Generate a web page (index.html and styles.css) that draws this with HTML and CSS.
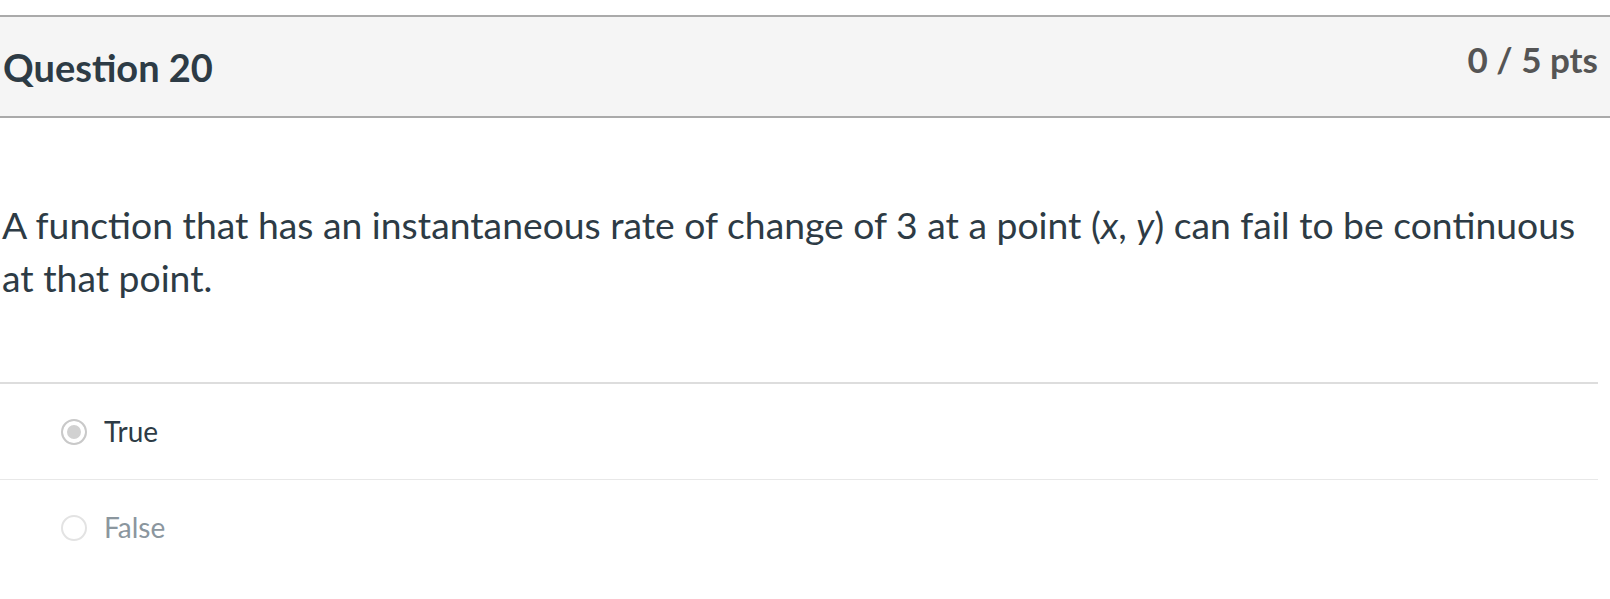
FILE: index.html
```html
<!DOCTYPE html>
<html lang="en">
<head>
<meta charset="utf-8">
<title>Question 20</title>
<link rel="stylesheet" href="styles.css">
</head>
<body>
<div class="question">
  <div class="q-header">
    <h2 class="q-title">Question 20</h2>
    <div class="q-points">0 / 5 pts</div>
  </div>
  <div class="q-text">A function that has an instantaneous rate of change of 3 at a point (<i>x</i>, <i>y</i>) can fail to be continuous at that point.</div>
  <div class="answers">
    <div class="answer answer-selected">
      <span class="radio radio-checked"></span>
      <span class="answer-label">True</span>
    </div>
    <div class="answer answer-muted">
      <span class="radio"></span>
      <span class="answer-label">False</span>
    </div>
  </div>
</div>
</body>
</html>
```

FILE: styles.css
```css
html, body {
  margin: 0;
  padding: 0;
  background: #ffffff;
}
body {
  font-family: Lato, "Open Sans", "Liberation Sans", sans-serif;
  color: #2d3b45;
}
.question {
  padding-top: 15px;
}
.q-header {
  display: flex;
  justify-content: space-between;
  align-items: flex-start;
  height: 99px;
  background: #f5f5f5;
  border-top: 2px solid #aaaaaa;
  border-bottom: 2px solid #aaaaaa;
  padding: 0 12px 0 3px;
}
.q-title {
  margin: 28px 0 0 0;
  font-size: 38px;
  line-height: 1.2;
  font-weight: 700;
  color: #2d3b45;
}
.q-points {
  margin-top: 21px;
  font-size: 35px;
  line-height: 1.2;
  font-weight: 700;
  color: #555555;
}
.q-text {
  margin: 80px 12px 0 2px;
  font-size: 37.3px;
  line-height: 53px;
  color: #2d3b45;
}
.answers {
  margin: 78px 12px 0 0;
}
.answer {
  display: flex;
  align-items: center;
  height: 95px;
  border-top: 1px solid #e8e8e8;
  padding-left: 61px;
  gap: 17px;
}
.answer-selected {
  border-top: 2px solid #dddddd;
}
.radio {
  box-sizing: border-box;
  width: 26px;
  height: 26px;
  border-radius: 50%;
  border: 2px solid #e3e3e3;
  background: #ffffff;
  flex: none;
}
.radio-checked {
  border: 2px solid #c9c9c9;
  background: #d1d1d1;
  box-shadow: inset 0 0 0 4px #ffffff;
}
.answer-label {
  font-size: 28px;
  line-height: 1.2;
}
.answer-selected .answer-label {
  color: #2d3b45;
}
.answer-muted .answer-label {
  color: #8b969e;
}
```
